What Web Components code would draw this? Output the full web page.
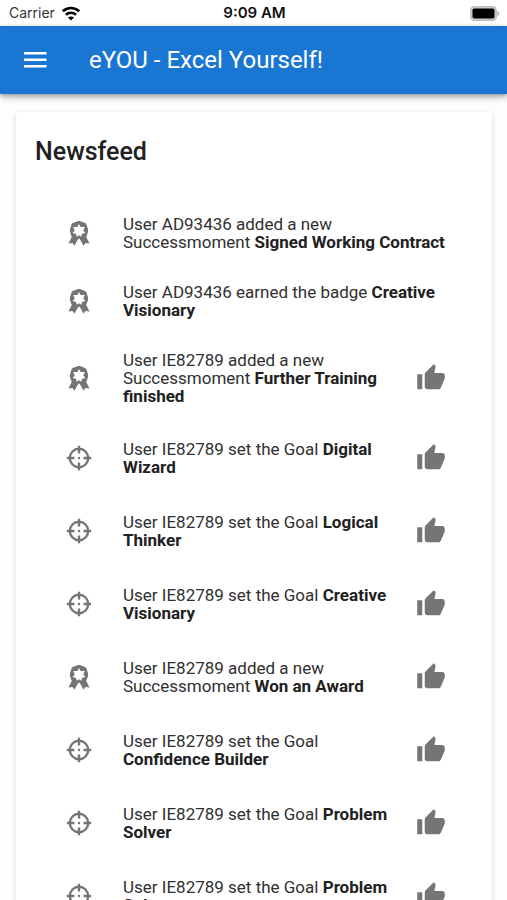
<!DOCTYPE html>
<html lang="en">
<head>
<meta charset="utf-8">
<meta name="viewport" content="width=device-width, initial-scale=1">
<title>eYOU - Excel Yourself!</title>
<style>
  html { height: 100%; overflow: hidden; }
  body { margin: 0; height: 100%; overflow: hidden; background: #fdfdfd; color: #212121; font-family: Roboto, "Noto Sans", sans-serif; }
</style>
</head>
<body>
<eyou-app></eyou-app>
<script>
const define = (name, html) => {
  const template = document.createElement('template');
  template.innerHTML = html;
  customElements.define(name, class extends HTMLElement {
    constructor() {
      super();
      this.attachShadow({ mode: 'open' }).append(template.content.cloneNode(true));
    }
  });
};

define('status-bar', `
<style>
  :host { display: grid; grid-template-columns: 1fr auto 1fr; align-items: center; height: 26px; padding: 0 7px 0 9px; box-sizing: border-box; background: #fff; color: #111; font: 14px/26px Inter, "Liberation Sans", sans-serif; }
  .left { display: flex; align-items: center; gap: 6px; color: #333; }
  .time { font-weight: 600; color: #111; font-size: 15px; }
  .battery { justify-self: end; }
  svg { display: block; }
</style>
<div class="left"><span>Carrier</span>
  <svg width="20" height="15" viewBox="0 0 20 15" fill="none" stroke="#000" stroke-width="2.6" aria-hidden="true"><path d="M1.8 5.3C6.4.9 13.6.9 18.2 5.3M4.9 8.7c2.9-2.7 7.300-2.700 10.200 0"/><path d="M10 14.500l-3-3c1.700-1.500 4.300-1.500 6 0z" fill="#000" stroke="none"/></svg>
</div>
<span class="time">9:09 AM</span>
<svg class="battery" width="30" height="15" viewBox="0 0 30 15" aria-hidden="true"><rect x=".7" y=".7" width="25.600" height="13.600" rx="3.700" fill="#ccc" stroke="#bbb" stroke-width="1.200"/><rect x="2.500" y="2.500" width="22" height="10" rx="1.800" fill="#000"/><path d="M27.500 5c2.300.8 2.300 4.200 0 5z" fill="#aaa"/></svg>
`);

define('app-bar', `
<style>
  :host { display: flex; align-items: center; gap: 40px; height: 68px; padding: 0 21px; background: #1976d2; color: #fff; box-shadow: 0 2px 5px rgba(0,0,0,.32), 0 4px 8px rgba(0,0,0,.12); position: relative; }
  button { display: block; padding: 0; border: 0; background: none; color: inherit; }
  svg { display: block; }
  h1 { margin: 0; font-size: 24px; line-height: 32px; font-weight: 400; }
</style>
<button aria-label="Open menu"><svg width="28" height="28" viewBox="0 0 28 28" fill="#fff"><path d="M3 6h22.500v2.500H3zM3 12.500h22.500V15H3zM3 19h22.500v2.500H3z"/></svg></button>
<h1><slot></slot></h1>
`);

define('news-card', `
<style>
  :host { display: block; margin: 18px 15px 0 16px; padding: 21px 19px; background: #fff; border-radius: 4px; box-shadow: 0 1px 5px rgba(0,0,0,.15); }
  h2 { margin: 0 0 28px; font-size: 25px; line-height: 38px; font-weight: 500; }
  .list { padding: 0 3px 0 15px; }
</style>
<h2><slot name="heading"></slot></h2>
<div class="list" role="list"><slot></slot></div>
`);

const icons = {
  badge: '<path fill-rule="evenodd" d="M12 .9c1.300 0 2 .5 3.200.9s2.500.6 3.300 1.700.8 2.200 1.200 3.300.8 1.900.8 3-.4 2-.8 3.100-.5 1.800-1.100 2.600l3.100 6.300-3.700-.6-1.900 2.500L13.600 19 12 16.900 10.400 19l-2.500 4.700L6 21.200l-3.700.6 3.100-6.300c-.6-.8-.7-1.500-1.100-2.600s-.8-2-.8-3.100.4-1.900.8-3 .4-2.200 1.200-3.300 2.100-1.300 3.300-1.700S10.700.9 12 .9zm0 2.900-1.500 2.700-3.900-.1 1.500 3.200-2 2.500 3.300.8.400 2.600L12 14l2.200 1.500.4-2.600 3.300-.8-2-2.500 1.500-3.200-3.900.1z"/>',
  goal: '<g fill="none" stroke="#757575" stroke-width="2.200"><circle cx="12" cy="12" r="8.500"/><path d="M12 .8v7M12 16.200v7M.8 12h7M16.200 12h7"/></g><circle cx="12" cy="12" r="1.100"/>'
};
const thumb = '<button aria-label="Like"><svg width="30" height="30" viewBox="0 0 24 24" fill="#757575"><path d="M1 21h4V9H1v12zm22-11c0-1.100-.9-2-2-2h-6.310l.95-4.570.03-.32c0-.41-.17-.79-.44-1.060L14.170 1 7.590 7.590C7.220 7.950 7 8.450 7 9v10c0 1.100.9 2 2 2h9c.83 0 1.540-.5 1.840-1.220l3.020-7.050c.09-.23.14-.47.14-.73v-2z"/></svg></button>';

customElements.define('news-item', class extends HTMLElement {
  constructor() {
    super();
    this.attachShadow({ mode: 'open' });
  }
  connectedCallback() {
    this.shadowRoot.innerHTML = `
<style>
  :host { display: flex; align-items: center; padding: 16px; }
  .icon { display: block; flex: none; width: 26px; height: 26px; margin-right: 31px; fill: #757575; }
  p { flex: 1; margin: 0; font-size: 17px; line-height: 18px; color: #303030; }
  ::slotted(b) { font-weight: 700; color: #212121; }
  button { display: grid; place-items: center; flex: none; width: 46px; height: 41px; padding: 0; border: 0; background: none; }
  button svg { display: block; }
</style>
<svg class="icon" viewBox="0 0 24 24" aria-hidden="true">${icons[this.getAttribute('icon')]}</svg>
<p><slot></slot></p>
${this.hasAttribute('likeable') ? thumb : ''}`;
    this.setAttribute('role', 'listitem');
  }
});

define('eyou-app', `
<style>
  :host { display: block; }
</style>
<status-bar></status-bar>
<app-bar>eYOU - Excel Yourself!</app-bar>
<main>
<news-card>
  <span slot="heading">Newsfeed</span>
  <news-item icon="badge">User AD93436 added a new Successmoment <b>Signed Working Contract</b></news-item>
  <news-item icon="badge">User AD93436 earned the badge <b>Creative Visionary</b></news-item>
  <news-item icon="badge" likeable>User IE82789 added a new Successmoment <b>Further Training finished</b></news-item>
  <news-item icon="goal" likeable>User IE82789 set the Goal <b>Digital Wizard</b></news-item>
  <news-item icon="goal" likeable>User IE82789 set the Goal <b>Logical Thinker</b></news-item>
  <news-item icon="goal" likeable>User IE82789 set the Goal <b>Creative Visionary</b></news-item>
  <news-item icon="badge" likeable>User IE82789 added a new Successmoment <b>Won an Award</b></news-item>
  <news-item icon="goal" likeable>User IE82789 set the Goal <b>Confidence Builder</b></news-item>
  <news-item icon="goal" likeable>User IE82789 set the Goal <b>Problem Solver</b></news-item>
  <news-item icon="goal" likeable>User IE82789 set the Goal <b>Problem Solver</b></news-item>
</news-card>
</main>
`);
</script>
</body>
</html>
